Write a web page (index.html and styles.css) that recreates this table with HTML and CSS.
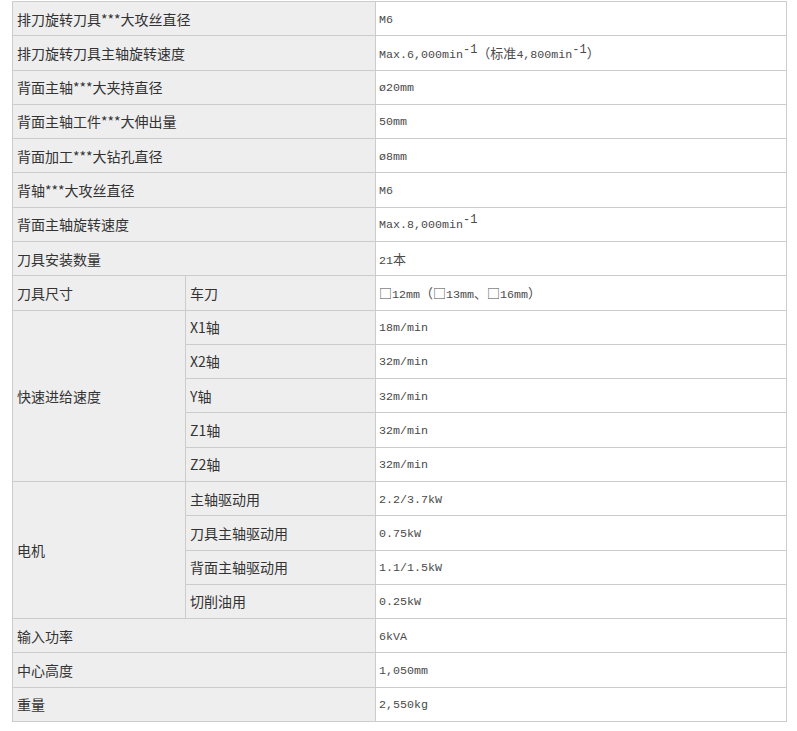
FILE: index.html
```html
<!DOCTYPE html>
<html lang="zh-CN">
<head>
<meta charset="utf-8">
<title>规格</title>
<link rel="stylesheet" href="styles.css">
</head>
<body>
<table class="spec">
  <colgroup>
    <col class="c1"><col class="c2"><col class="c3">
  </colgroup>
  <tbody>
    <tr><th colspan="2">排刀旋转刀具***大攻丝直径</th><td>M6</td></tr>
    <tr><th colspan="2">排刀旋转刀具主轴旋转速度</th><td>Max.6,000min<sup>-1</sup><span class="cjk">（标准</span>4,800min<sup>-1</sup><span class="cjk">）</span></td></tr>
    <tr><th colspan="2">背面主轴***大夹持直径</th><td>ø20mm</td></tr>
    <tr><th colspan="2">背面主轴工件***大伸出量</th><td>50mm</td></tr>
    <tr><th colspan="2">背面加工***大钻孔直径</th><td>ø8mm</td></tr>
    <tr><th colspan="2">背轴***大攻丝直径</th><td>M6</td></tr>
    <tr><th colspan="2">背面主轴旋转速度</th><td>Max.8,000min<sup>-1</sup></td></tr>
    <tr><th colspan="2">刀具安装数量</th><td>21<span class="cjk">本</span></td></tr>
    <tr><th>刀具尺寸</th><th>车刀</th><td><span class="cjk">□</span>12mm<span class="cjk">（□</span>13mm<span class="cjk">、□</span>16mm<span class="cjk">）</span></td></tr>
    <tr><th rowspan="5">快速进给速度</th><th>X1轴</th><td>18m/min</td></tr>
    <tr><th>X2轴</th><td>32m/min</td></tr>
    <tr><th>Y轴</th><td>32m/min</td></tr>
    <tr><th>Z1轴</th><td>32m/min</td></tr>
    <tr><th>Z2轴</th><td>32m/min</td></tr>
    <tr><th rowspan="4">电机</th><th>主轴驱动用</th><td>2.2/3.7kW</td></tr>
    <tr><th>刀具主轴驱动用</th><td>0.75kW</td></tr>
    <tr><th>背面主轴驱动用</th><td>1.1/1.5kW</td></tr>
    <tr><th>切削油用</th><td>0.25kW</td></tr>
    <tr><th colspan="2">输入功率</th><td>6kVA</td></tr>
    <tr><th colspan="2">中心高度</th><td>1,050mm</td></tr>
    <tr><th colspan="2">重量</th><td>2,550kg</td></tr>
  </tbody>
</table>
</body>
</html>
```

FILE: styles.css
```css
html, body {
  margin: 0;
  padding: 0;
  background: #ffffff;
}

.spec {
  margin: 1px 0 0 12px;
  width: 774px;
  border-collapse: collapse;
  table-layout: fixed;
}

.spec .c1 { width: 173px; }
.spec .c2 { width: 190px; }
.spec .c3 { width: 411px; }

.spec tr {
  height: 34.2857px;
}

.spec th,
.spec td {
  border: 1px solid #cccccc;
  padding: 0 4px;
  text-align: left;
  vertical-align: middle;
}

.spec th {
  background: #eeeeee;
  font-family: "Noto Sans CJK SC", sans-serif;
  font-size: 14px;
  font-weight: normal;
  color: #333333;
  padding-left: 4px;
  line-height: 20px;
}

.spec td {
  background: #ffffff;
  font-family: "Liberation Mono", "Noto Sans CJK SC", monospace;
  font-size: 11.67px;
  color: #4a4a4a;
  line-height: 20px;
  padding-left: 3px;
  padding-top: 2px;
}

.spec td .cjk {
  font-family: "Noto Sans CJK SC", sans-serif;
  font-size: 13px;
}

.spec sup {
  font-size: 12px;
  line-height: 0;
  vertical-align: 5px;
}
```
